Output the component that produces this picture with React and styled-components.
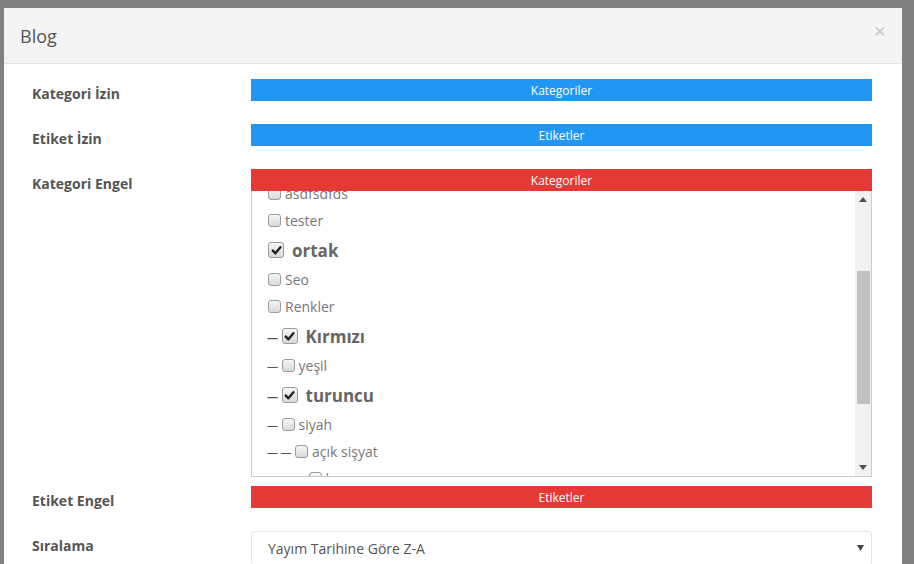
import React, { useLayoutEffect, useRef } from 'react';
import styled, { createGlobalStyle } from 'styled-components';

const GlobalStyle = createGlobalStyle`
  html, body {
    margin: 0;
    padding: 0;
    background: #808080;
    overflow: hidden;
    font-family: "Open Sans", "Liberation Sans", sans-serif;
  }
`;

const Backdrop = styled.div`
  height: 100vh;
  box-sizing: border-box;
  padding: 8px 0 0 4px;
`;

const Modal = styled.div`
  width: 898px;
  background: #fff;
`;

const Header = styled.div`
  height: 56px;
  box-sizing: border-box;
  background: #f4f4f4;
  border-bottom: 1px solid #e3e3e3;
  display: flex;
  justify-content: space-between;
  align-items: center;
  padding: 0 16px;
`;

const Title = styled.h4`
  margin: 0;
  font-size: 18px;
  font-weight: 400;
  color: #555;
  line-height: 24px;
`;

const Close = styled.span`
  align-self: flex-start;
  margin-top: 12px;
  font-family: "Liberation Sans", sans-serif;
  font-size: 21px;
  line-height: 1;
  color: #c8c8c8;
`;

const Body = styled.div`
  padding: 15px 30px 0 28px;
`;

const Row = styled.div`
  display: grid;
  grid-template-columns: 219px 1fr;
  margin-bottom: ${(p) => p.$gap}px;
`;

const Label = styled.div`
  padding-top: 5px;
  font-size: 14px;
  line-height: 20px;
  font-weight: 700;
  color: #555;
`;

const Field = styled.div`
  display: flex;
  flex-direction: column;
`;

const Bar = styled.div`
  height: 22px;
  background: ${(p) => (p.$danger ? '#e53935' : '#2196f3')};
  color: #fff;
  font-size: 12px;
  display: flex;
  align-items: center;
  justify-content: center;
`;

const ListFrame = styled.div`
  height: 286px;
  box-sizing: border-box;
  border: 1px solid #ccc;
  border-top: none;
  display: flex;
`;

const Viewport = styled.div`
  flex: 1;
  overflow: hidden;
  padding: 6px 0 6px 16px;
`;

const Scrollbar = styled.div`
  width: 16px;
  flex: none;
  background: #f1f1f1;
  display: flex;
  flex-direction: column;
`;

const ArrowButton = styled.div`
  height: 17px;
  flex: none;
  display: flex;
  align-items: center;
  justify-content: center;
`;

const Track = styled.div`
  flex: 1;
`;

const Thumb = styled.div`
  height: 133px;
  margin: 63px 1.5px 0;
  background: #c1c1c1;
`;

const Item = styled.div`
  display: flex;
  align-items: center;
  height: ${(p) => (p.$bold ? 32 : 27)}px;
  font-size: ${(p) => (p.$bold ? 17 : 14)}px;
  font-weight: ${(p) => (p.$bold ? 700 : 400)};
  color: ${(p) => (p.$bold ? '#666' : '#777')};
  white-space: nowrap;
`;

const Dash = styled.span`
  display: inline-block;
  width: 13.5px;
  font-size: 11px;
  color: #555;
  margin-left: -1px;
  margin-right: 1px;
`;

const Box = styled.span`
  flex: none;
  width: ${(p) => p.$size}px;
  height: ${(p) => p.$size}px;
  box-sizing: border-box;
  border: 1px solid #9c9c9c;
  border-radius: 3px;
  background: linear-gradient(#f6f6f6, #d9d9d9);
  margin-right: ${(p) => (p.$checked ? 8 : 4)}px;
  display: flex;
  align-items: center;
  justify-content: center;
`;

const Select = styled.div`
  height: 34px;
  box-sizing: border-box;
  border: 1px solid #e5e5e5;
  border-radius: 3px;
  display: flex;
  align-items: center;
  justify-content: space-between;
  padding: 0 7px 0 16px;
  font-size: 14px;
  color: #555;
`;

const items = [
  { name: 'Genel', level: 0 },
  { name: 'Haberler', level: 0 },
  { name: 'Duyurular', level: 0 },
  { name: 'deneme', level: 0 },
  { name: 'asdfsdfds', level: 0 },
  { name: 'tester', level: 0 },
  { name: 'ortak', level: 0, checked: true },
  { name: 'Seo', level: 0 },
  { name: 'Renkler', level: 0 },
  { name: 'Kırmızı', level: 1, checked: true },
  { name: 'yeşil', level: 1 },
  { name: 'turuncu', level: 1, checked: true },
  { name: 'siyah', level: 1 },
  { name: 'açık sişyat', level: 2 },
  { name: 'koyu', level: 3 },
  { name: 'mavi', level: 1 },
  { name: 'Sarı', level: 0 },
  { name: 'Yazılım', level: 0 },
];

const Check = () => (
  <svg width="11" height="11" viewBox="0 0 11 11">
    <path d="M1.8 5.6 L4.4 8.3 L9.4 2.2" fill="none" stroke="#222" strokeWidth="2.4" strokeLinecap="round" strokeLinejoin="round" />
  </svg>
);

const Arrow = ({ down }) => (
  <svg width="8" height="5" viewBox="0 0 8 5">
    <path d={down ? 'M0 0 H8 L4 5 Z' : 'M0 5 H8 L4 0 Z'} fill="#505050" />
  </svg>
);

const CategoryList = () => {
  const ref = useRef(null);
  useLayoutEffect(() => {
    if (ref.current) ref.current.scrollTop = 125;
  }, []);
  return (
    <ListFrame>
      <Viewport ref={ref}>
        {items.map((it) => (
          <Item key={it.name} $bold={it.checked}>
            {Array.from({ length: it.level }).map((_, i) => (
              <Dash key={i}>—</Dash>
            ))}
            <Box $size={it.checked ? 16 : 13} $checked={it.checked}>
              {it.checked && <Check />}
            </Box>
            {it.name}
          </Item>
        ))}
      </Viewport>
      <Scrollbar>
        <ArrowButton>
          <Arrow />
        </ArrowButton>
        <Track>
          <Thumb />
        </Track>
        <ArrowButton>
          <Arrow down />
        </ArrowButton>
      </Scrollbar>
    </ListFrame>
  );
};

const App = () => {
  return (
    <>
      <GlobalStyle />
      <Backdrop>
        <Modal>
          <Header>
            <Title>Blog</Title>
            <Close>×</Close>
          </Header>
          <Body>
            <Row $gap={20}>
              <Label>Kategori İzin</Label>
              <Bar>Kategoriler</Bar>
            </Row>
            <Row $gap={20}>
              <Label>Etiket İzin</Label>
              <Bar>Etiketler</Bar>
            </Row>
            <Row $gap={9}>
              <Label>Kategori Engel</Label>
              <Field>
                <Bar $danger>Kategoriler</Bar>
                <CategoryList />
              </Field>
            </Row>
            <Row $gap={20}>
              <Label>Etiket Engel</Label>
              <Bar $danger>Etiketler</Bar>
            </Row>
            <Row $gap={20}>
              <Label>Sıralama</Label>
              <Select>
                Yayım Tarihine Göre Z-A
                <svg width="7" height="6" viewBox="0 0 7 6">
                  <path d="M0 0 H7 L3.5 6 Z" fill="#444" />
                </svg>
              </Select>
            </Row>
          </Body>
        </Modal>
      </Backdrop>
    </>
  );
};

export default App;
